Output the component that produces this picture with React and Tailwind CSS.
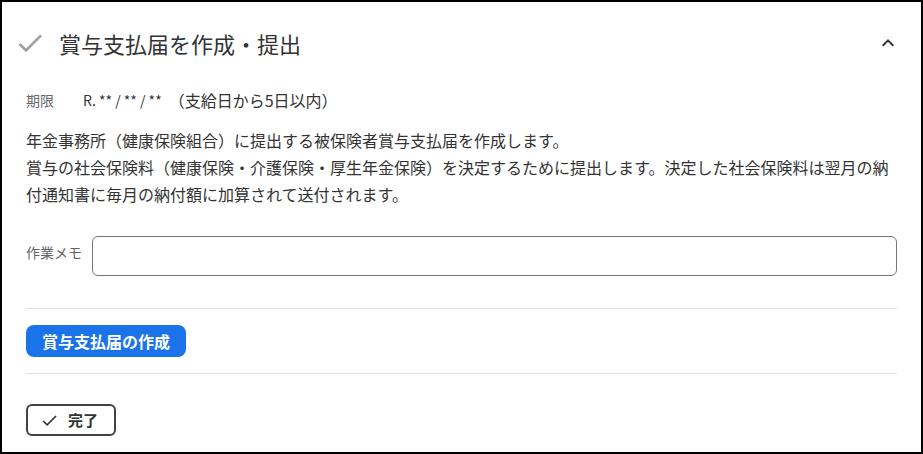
import React from "react";

export default function App() {
  return (
    <div className="w-[923px] h-[454px] border-2 border-black bg-white overflow-hidden font-['Noto_Sans_CJK_JP','Noto_Sans',sans-serif] text-[#333333]">
      <div className="flex items-center h-[82px] pl-[12px] pr-[21px]">
        <svg width="32" height="32" viewBox="0 0 24 24" className="shrink-0 text-[#a0a0a0]">
          <path fill="currentColor" d="M9 16.17L4.83 12l-1.42 1.41L9 19 21 7l-1.41-1.41z" />
        </svg>
        <div className="ml-[13px] text-[22px] leading-[30px]">賞与支払届を作成・提出</div>
        <div className="flex-1" />
        <svg width="24" height="24" viewBox="0 0 24 24" className="shrink-0 text-[#333]">
          <path fill="currentColor" d="M12 8l-6 6 1.41 1.41L12 10.83l4.59 4.58L18 14z" />
        </svg>
      </div>
      <div className="px-6">
        <div className="mt-[4px] flex items-center h-6 text-[14px]">
          <span className="text-[#666] w-[57px]">期限</span>
          <span>R. ** / ** / **</span>
          <span className="ml-[7px] text-[16px]">（支給日から5日以内）</span>
        </div>
        <p className="mt-[15px] text-[16px] leading-[27px]">
          年金事務所（健康保険組合）に提出する被保険者賞与支払届を作成します。
          <br />
          賞与の社会保険料（健康保険・介護保険・厚生年金保険）を決定するために提出します。決定した社会保険料は翌月の納付通知書に毎月の納付額に加算されて送付されます。
        </p>
        <div className="mt-[28px] flex items-start">
          <div className="w-[66px] pt-[6px] text-[14px] leading-5 text-[#666]">作業メモ</div>
          <div className="flex-1 h-10 rounded-[6px] border border-[#757575]" />
        </div>
        <div className="mt-[32px] h-px bg-[#e0e0e0]" />
        <div className="mt-4">
          <button className="h-8 px-4 rounded-[8px] bg-[#1a73e8] text-white text-[16px] font-bold leading-8">
            賞与支払届の作成
          </button>
        </div>
        <div className="mt-4 h-px bg-[#e0e0e0]" />
        <div className="mt-[30px]">
          <button className="h-8 w-[90px] flex items-center pl-[12px] rounded-[6px] border-2 border-[#424242] text-[15px] font-bold text-[#333]">
            <svg width="19" height="19" viewBox="0 0 24 24" className="shrink-0">
              <path fill="currentColor" d="M9 16.17L4.83 12l-1.42 1.41L9 19 21 7l-1.41-1.41z" />
            </svg>
            <span className="ml-[9px]">完了</span>
          </button>
        </div>
      </div>
    </div>
  );
}
